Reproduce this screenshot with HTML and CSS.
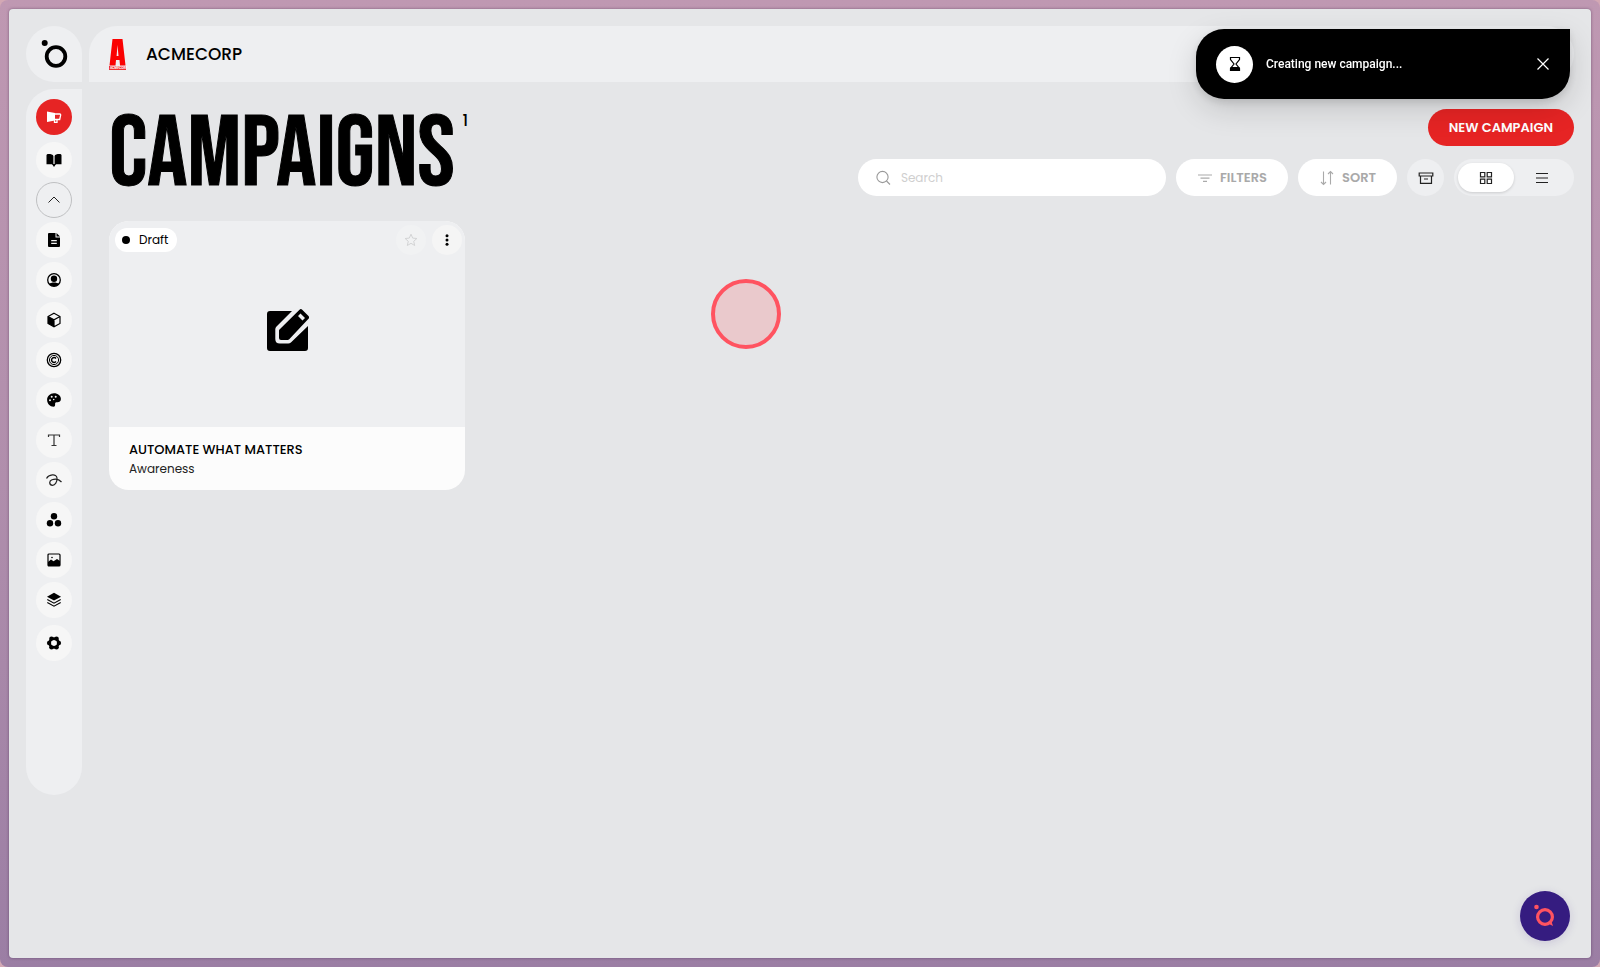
FILE: index.html
```html
<!DOCTYPE html>
<html lang="en">
<head>
<meta charset="utf-8">
<title>Campaigns</title>
<link rel="stylesheet" href="styles.css">
</head>
<body>
<div class="frame">
<div class="panel">
  <a class="brand" href="#" aria-label="Home">
    <svg width="28" height="30" viewBox="0 0 28 30"><circle cx="4.700" cy="4" r="3"/><circle cx="16" cy="17.500" r="9.300" fill="none" stroke="#000" stroke-width="3.800"/></svg>
  </a>
  <header class="topbar">
    <svg class="mark" width="18" height="31" viewBox="0 0 18 31"><path fill="#fa0202" fill-rule="evenodd" d="M3.500 0h10l3 26.500H11l-.5-5.500H7l-.5 5.500H.500zM8.500 6 7.600 17h1.900z"/><rect x="0" y="27" width="17" height="4" fill="#f03030"/><text x="1" y="30" class="mark-text">ACMECORP</text></svg>
    <span class="company">ACMECORP</span>
  </header>
  <nav class="side" aria-label="Main">
    <button class="nav active" aria-label="Campaigns"><svg viewBox="0 0 16 16"><path fill="#fff" d="M1 2.500 9 4v7.500L1 13z"/><path d="M9 5h5l.7 1-1 4.500H9M8.500 11v2.300h2.500v-2.500" fill="none" stroke="#fff" stroke-width="1.300"/></svg></button>
    <button class="nav" aria-label="Brand book"><svg viewBox="0 0 16 16"><path d="M.5 3.200C.5 2.300 1.500 2 2.500 2 5 2 7 2.500 7.400 4v8.700C6 12.200 4 12.300.5 12.300zM15.500 3.200c0-.9-1-1.200-2-1.200C11 2 9 2.500 8.600 4v8.700c1.400-.5 3.400-.4 6.900-.4z"/><path d="M6 12h4l-2 3z"/></svg></button>
    <button class="nav outline" aria-label="Collapse"><svg viewBox="0 0 16 16"><path d="m2.500 10.500 5.500-5.500 5.500 5.500" fill="none" stroke="#222"/></svg></button>
    <button class="nav" aria-label="Documents"><svg viewBox="0 0 16 16"><path fill-rule="evenodd" d="M3 1h6.500v4.500H14V14a1 1 0 0 1-1 1H3a1 1 0 0 1-1-1V2a1 1 0 0 1 1-1zM5.200 8v1.200h5.600V8zm0 2.800V12h5.600v-1.200z"/><path d="M10.500 1 14 4.500h-3.500z"/></svg></button>
    <button class="nav" aria-label="Audience"><svg viewBox="0 0 16 16"><circle cx="8" cy="8" r="6.300" fill="none" stroke="#000" stroke-width="1.300"/><circle cx="8" cy="6.800" r="3.200"/><path d="M3 12c2-2 8-2 10 0-2.500 3-7.500 3-10 0z"/></svg></button>
    <button class="nav" aria-label="Products"><svg viewBox="0 0 16 16"><path d="m8 1.300 6 3.200v7L8 14.700l-6-3.200v-7zM2 4.500l6 3.200 6-3.200M8 7.700v7" fill="none" stroke="#000" stroke-width="1.200"/><path d="m2 4.500 6 3.200v7l-6-3.200z"/></svg></button>
    <button class="nav" aria-label="Copyright"><svg viewBox="0 0 16 16" fill="none" stroke="#000"><circle cx="8" cy="8" r="6.700" stroke-width="1.300"/><circle cx="8" cy="8" r="4.600"/><path d="M10 6.400a2.500 2.500 0 1 0 0 3.200" stroke-width="1.500"/></svg></button>
    <button class="nav" aria-label="Colours"><svg viewBox="0 0 16 16"><path fill-rule="evenodd" d="M8 1.300c4 0 6.900 2.700 6.900 5.700 0 2.200-1.600 3.300-3.300 3.300-1.800 0-2.700.4-2.500 1.700.2 1.500-.2 2.700-1.600 2.700C4 14.700 1.100 11.700 1.100 8S4 1.300 8 1.300zM4 7.200a1 1 0 1 0 0 2 1 1 0 0 0 0-2zm1.700-3.400a1 1 0 1 0 0 2 1 1 0 0 0 0-2zm4 0a1 1 0 1 0 0 2 1 1 0 0 0 0-2zM7.700 6.700a.8.800 0 1 0 0 1.600.8.800 0 0 0 0-1.600z"/></svg></button>
    <button class="nav" aria-label="Typography"><svg viewBox="0 0 16 16"><path d="M2.500 5V3h11v2M8 3v10.500M5.500 13.500h5" fill="none" stroke="#333" stroke-width="1.200"/></svg></button>
    <button class="nav" aria-label="Tone of voice"><svg viewBox="0 0 16 16"><path d="M.5 6.500C2.500 2.500 10.500 1 11 6c.3 4-2 7.300-4.500 7.300C3 13.300 2.800 8.800 6 7.700c3.500-1.200 7-.6 9.500 2.300" fill="none" stroke="#222" stroke-width="1.200"/></svg></button>
    <button class="nav" aria-label="Assets"><svg viewBox="0 0 16 16"><circle cx="8" cy="4.200" r="3.200"/><circle cx="4" cy="11.200" r="3.200"/><circle cx="12" cy="11.200" r="3.200"/></svg></button>
    <button class="nav" aria-label="Images"><svg viewBox="0 0 16 16"><rect x="2" y="2" width="12" height="12" rx="1" fill="none" stroke="#000" stroke-width="1.200"/><path d="m2 10 3-2.500 2.500 1.700L11 7l3 2v5H2z"/><circle cx="6" cy="5.500" r=".8"/></svg></button>
    <button class="nav" aria-label="Layers"><svg viewBox="0 0 16 16"><path d="m8 .8 7 3.900-7 3.900-7-3.900z"/><path d="m1.300 7.500 6.700 3.700 6.700-3.700M1.300 10.500 8 14.200l6.700-3.700" fill="none" stroke="#000" stroke-width="1.100"/></svg></button>
    <button class="nav last" aria-label="Settings"><svg viewBox="0 0 16 16"><circle cx="8" cy="8" r="4.300" fill="none" stroke="#000" stroke-width="3"/><circle cx="3.200" cy="8" r="2.300"/><circle cx="12.800" cy="8" r="2.300"/><circle cx="5.500" cy="3.800" r="2.300"/><circle cx="10.500" cy="3.800" r="2.300"/><circle cx="5.500" cy="12.200" r="2.300"/><circle cx="10.500" cy="12.200" r="2.300"/><circle cx="8" cy="8" r="2.800" fill="#f6f6f6"/></svg></button>
  </nav>
  <main class="content">
    <div class="head">
      <h1 class="title">CAMPAIGNS<sup class="count">1</sup></h1>
      <div class="tools">
        <button class="new">NEW CAMPAIGN</button>
        <div class="row">
          <label class="search">
            <svg width="16" height="16" viewBox="0 0 16 16" fill="none" stroke="#999" stroke-width="1.100"><circle cx="6.500" cy="7" r="5.600"/><path d="m10.500 11 3.500 3.500"/></svg>
            <input type="search" placeholder="Search" aria-label="Search">
          </label>
          <button class="pill"><svg width="16" height="16" viewBox="0 0 16 16" stroke="#aaa" stroke-width="1.200"><path d="M1 5h14M3.500 8.200h9M6 11.300h4"/></svg>FILTERS</button>
          <button class="pill"><svg width="16" height="16" viewBox="0 0 16 16" fill="none" stroke="#aaa" stroke-width="1.100"><path d="M4.500 1.500v13M2 12l2.500 2.500L7 12M11.500 14.500v-13M9 4l2.500-2.500L14 4"/></svg>SORT</button>
          <button class="round" aria-label="Archive"><svg width="16" height="16" viewBox="0 0 16 16" fill="none" stroke="#222" stroke-width="1.200"><path d="M1.200 3h13.600v3H1.200zM2.500 6v7.300h11V6M6 9h4"/></svg></button>
          <div class="switch">
            <button class="seg on" aria-label="Grid view"><svg width="16" height="16" viewBox="0 0 16 16" fill="none" stroke="#222" stroke-width="1.200"><path d="M2.500 2.500h4.300v4.300H2.500zM9.200 2.500h4.300v4.300H9.200zM2.500 9.200h4.300v4.300H2.500zM9.200 9.200h4.300v4.300H9.200z"/></svg></button>
            <button class="seg" aria-label="List view"><svg width="16" height="16" viewBox="0 0 16 16" stroke="#222" stroke-width="1.100"><path d="M2 3.500h12M2 8h12M2 12.500h12"/></svg></button>
          </div>
        </div>
      </div>
    </div>
    <div class="cards">
      <article class="card">
        <div class="media">
          <div class="card-top">
            <span class="status"><i class="dot"></i>Draft</span>
            <button class="mini faint" aria-label="Favourite"><svg width="14" height="14" viewBox="0 0 14 14"><path d="m7 1.200 1.700 3.900 4.200.4-3.200 2.800 1 4.200L7 10.300l-3.700 2.200 1-4.200L1.100 5.500l4.200-.4z" fill="none" stroke="#d2d3d4"/></svg></button>
            <button class="mini" aria-label="More"><svg width="14" height="14" viewBox="0 0 14 14"><circle cx="7" cy="2.700" r="1.500"/><circle cx="7" cy="7" r="1.500"/><circle cx="7" cy="11.300" r="1.500"/></svg></button>
          </div>
          <svg class="edit" width="42" height="42" viewBox="0 0 42 42"><path d="M3 2h22L9.500 17.500A4 4 0 0 0 8.300 20v10q0 4.500 4.500 4.500h8.400a4 4 0 0 0 2.700-1.100L41 17v22a3 3 0 0 1-3 3H3a3 3 0 0 1-3-3V5a3 3 0 0 1 3-3z"/><path fill-rule="evenodd" d="M32.500.7a2 2 0 0 1 2.700 0l6.300 6.300a2 2 0 0 1 0 2.700L22 30.500a2 2 0 0 1-1.300.5H14q-2 0-2-2v-7.300a2 2 0 0 1 .5-1.300zM33.500 4.500 31 7l4.500 4.500L38 9z"/></svg>
        </div>
        <div class="info">
          <h2 class="name">AUTOMATE WHAT MATTERS</h2>
          <p class="goal">Awareness</p>
        </div>
      </article>
    </div>
  </main>
</div>
</div>

<div class="toast" role="status">
  <span class="toast-icon"><svg width="16" height="16" viewBox="0 0 16 16"><path d="M3.500 1.500h9v2L9 8l3.500 4.500v2h-9v-2L7 8 3.500 3.500zM3 1.500h10M3 14.500h10" fill="none" stroke="#000" stroke-width="1.200"/><path d="M3.500 11h9v3.500h-9z"/></svg></span>
  <span class="toast-text">Creating new campaign...</span>
  <button class="close" aria-label="Close"><svg width="14" height="14" viewBox="0 0 14 14"><path d="m1.500 1.500 11 11M12.500 1.500l-11 11" stroke="#fff" stroke-width="1.200"/></svg></button>
</div>
<div class="tap"></div>
<button class="assistant" aria-label="Assistant"><svg width="22" height="24" viewBox="0 0 22 24"><circle cx="2.500" cy="3" r="2.300" fill="#ff5360"/><circle cx="11" cy="13" r="7.400" fill="none" stroke="#ff5360" stroke-width="3.200"/><path d="M13 19l4-3 2 6z" fill="#ff5360"/></svg></button>
</body>
</html>
```
FILE: styles.css
```css
* { box-sizing: border-box; }
body {
  margin: 0;
  font-family: Poppins, Inter, sans-serif;
  color: #000;
  background: #d3a8b4;
}
button {
  border: 0;
  padding: 0;
  margin: 0;
  font: inherit;
  color: inherit;
  display: flex;
  align-items: center;
  justify-content: center;
  cursor: pointer;
}
svg { flex: none; display: block; }
.frame {
  min-height: 100vh;
  padding: 9px;
  display: flex;
  border-radius: 8px;
  background: linear-gradient(to bottom, #bf98b2, #b08eac 50%, #9b7ea4);
}
.panel {
  flex: 1;
  padding: 17px;
  display: grid;
  grid-template-columns: 56px 1fr;
  grid-template-rows: 56px 1fr;
  gap: 7px;
  background: #e5e6e8;
  border-radius: 4px;
  box-shadow: 0 0 3px rgba(60, 30, 70, .5);
}
.brand {
  display: flex;
  align-items: center;
  justify-content: center;
  background: #eeeff1;
  border-radius: 28px 28px 0 28px;
}
.topbar {
  display: flex;
  align-items: center;
  gap: 19px;
  padding: 0 20px;
  background: #eeeff1;
  border-radius: 28px 28px 28px 0;
}
.mark-text { font: 700 3px Inter, sans-serif; fill: #fff; }
.company { font-size: 17px; font-weight: 500; }
.side {
  height: 73vh;
  display: flex;
  flex-direction: column;
  align-items: center;
  gap: 4px;
  padding: 10px 0;
  background: #eeeff1;
  border-radius: 28px 0 28px 28px;
}
.nav {
  width: 36px;
  height: 36px;
  border-radius: 50%;
  background: #f6f6f6;
}
.nav svg { width: 16px; height: 16px; }
.active { background: #e62424; margin-bottom: 3px; }
.outline { background: #eeeff1; border: 1px solid #bfc0c2; }
.last { margin-top: 3px; }
.content { padding-left: 20px; }
.head {
  display: flex;
  justify-content: space-between;
  align-items: flex-start;
  padding-top: 20px;
}
.title {
  margin: 0;
  display: flex;
  align-items: flex-start;
  gap: 8px;
  font-family: "Bebas Neue", "Liberation Sans Narrow", sans-serif;
  font-size: 100px;
  font-weight: 400;
  line-height: 92px;
  -webkit-text-stroke: 1px #000;
}
.count {
  font: 500 16px/24px Poppins, Inter, sans-serif;
  -webkit-text-stroke: 0;
}
.tools {
  display: flex;
  flex-direction: column;
  align-items: flex-end;
  gap: 13px;
}
.new {
  height: 37px;
  padding: 0 21px;
  border-radius: 19px;
  background: #e62424;
  color: #fff;
  font-size: 13px;
  font-weight: 600;
}
.row { display: flex; gap: 10px; }
.search {
  width: 308px;
  height: 37px;
  display: flex;
  align-items: center;
  gap: 9px;
  padding: 0 18px;
  border-radius: 19px;
  background: #fff;
}
.search input {
  flex: 1;
  min-width: 0;
  border: 0;
  padding: 0;
  outline: 0;
  background: none;
  font: 400 12px Poppins, Inter, sans-serif;
}
.search input::placeholder { color: #cfcfcf; }
.pill {
  height: 37px;
  padding: 0 21px;
  gap: 7px;
  border-radius: 19px;
  background: #fff;
  color: #a9a9a9;
  font-size: 13px;
  font-weight: 600;
}
.round {
  width: 37px;
  height: 37px;
  border-radius: 50%;
  background: #eeeff1;
}
.switch {
  display: flex;
  padding: 4px;
  border-radius: 19px;
  background: #eeeff1;
}
.seg {
  width: 56px;
  border-radius: 15px;
  background: none;
}
.on { background: #fff; box-shadow: 0 1px 3px rgba(0, 0, 0, .15); }
.cards {
  display: grid;
  grid-template-columns: repeat(4, 1fr);
  gap: 14px;
  margin-top: 20px;
}
.card {
  border-radius: 20px;
  overflow: hidden;
  background: #fcfcfc;
}
.media {
  height: 206px;
  padding: 4px 3px 0 6px;
  background: #eeeff1;
}
.card-top { display: flex; align-items: center; gap: 6px; }
.status {
  display: flex;
  align-items: center;
  gap: 9px;
  height: 24px;
  padding: 0 9px 0 7px;
  margin-right: auto;
  border-radius: 12px;
  background: #fff;
  font-size: 12px;
}
.dot { width: 8px; height: 8px; border-radius: 50%; background: #000; }
.mini {
  width: 30px;
  height: 30px;
  border-radius: 50%;
  background: #f5f5f5;
}
.faint { background: #f1f2f3; }
.edit { margin: 54px auto 0; }
.info { padding: 14px 20px 12px; }
.name { margin: 0; font-size: 13px; font-weight: 500; line-height: 18px; }
.goal { margin: 0; font-size: 12px; line-height: 19px; color: #222; }
.toast {
  position: fixed;
  top: 29px;
  right: 30px;
  width: 374px;
  height: 70px;
  display: flex;
  align-items: center;
  gap: 13px;
  padding: 0 20px;
  border-radius: 28px 0 28px 28px;
  background: #000;
  color: #fff;
  box-shadow: 0 10px 30px rgba(0, 0, 0, .15), 0 3px 8px rgba(0, 0, 0, .12);
}
.toast-icon {
  width: 37px;
  height: 37px;
  display: flex;
  align-items: center;
  justify-content: center;
  border-radius: 50%;
  background: #fff;
}
.toast-text { flex: 1; font: 500 12px/18px Roboto, Inter, sans-serif; }
.close { width: 14px; height: 14px; background: none; }
.tap {
  position: fixed;
  left: 711px;
  top: 279px;
  width: 70px;
  height: 70px;
  border: 4px solid #ff5360;
  border-radius: 50%;
  background: rgba(255, 83, 96, .2);
}
.assistant {
  position: fixed;
  right: 30px;
  bottom: 26px;
  width: 50px;
  height: 50px;
  border-radius: 50%;
  background: #351c80;
  box-shadow: 0 2px 10px rgba(53, 28, 128, .15);
}
```
